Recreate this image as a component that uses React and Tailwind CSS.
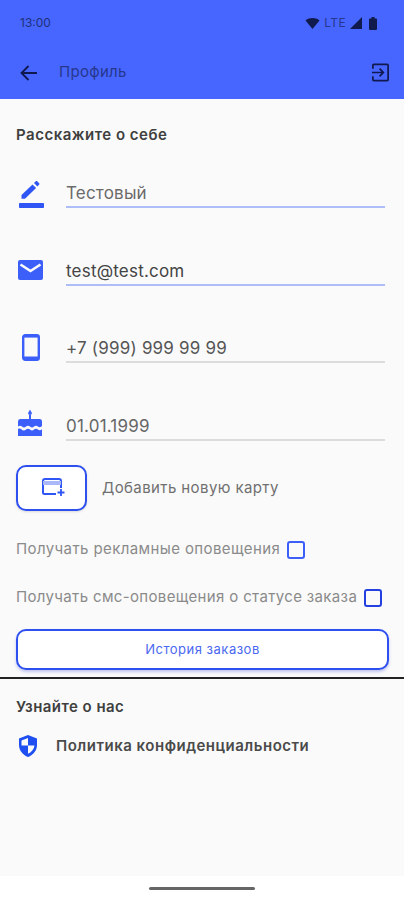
import React from 'react';

function Field({ icon, value, active, textClass, iconClass }) {
  return (
    <div className="flex h-[77.67px] pl-4 pr-[19px]">
      <div className="w-[50px] h-[66px] flex items-center pl-[2px] shrink-0">
        <div className={iconClass}>{icon}</div>
      </div>
      <div className={`flex-1 h-[49px] border-b-2 flex items-end pb-[1px] text-[17px] leading-[24px] tracking-[0.2px] ${active ? 'border-[#aebcf8]' : 'border-[#dcdcdc]'} ${textClass}`}>
        {value}
      </div>
    </div>
  );
}

const PencilIcon = (
  <svg width="26" height="28" viewBox="0 0 26 28" fill="#2f56f5" className="block ml-[1px]">
    <rect x="0" y="23" width="25" height="5" rx="0.800" />
    <path d="M2.500 15 13.500 4.500l3.600 3.600L6 18.800H2.500z" />
    <path d="M15 3l1.800-1.800c.4-.4 1-.4 1.400 0l2 2c.4.4.4 1 0 1.400L18.400 6.400z" />
  </svg>
);

const MailIcon = (
  <svg width="25" height="20" viewBox="0 0 25 20" className="block">
    <rect width="25" height="20" rx="2" fill="#3c5ffa" />
    <path d="M2.500 4.500 12.500 11l10-6.500" fill="none" stroke="#fafafa" strokeWidth="2.600" />
  </svg>
);

const PhoneIcon = (
  <svg width="18" height="27" viewBox="0 0 18 27" className="block ml-1">
    <rect x="1.200" y="1.200" width="15.600" height="24.600" rx="2" fill="none" stroke="#3c5ffa" strokeWidth="2.400" />
    <rect x="1.200" y="22.500" width="15.600" height="3.300" fill="#3c5ffa" />
    <rect x="1.200" y="1.200" width="15.600" height="2.400" fill="#3c5ffa" />
  </svg>
);

const CakeIcon = (
  <svg width="24" height="27" viewBox="0 0 24 27" fill="#3c5ffa" className="block">
    <path d="M12 0.500l1.800 3.200c.5 1.200-.6 2.300-1.800 2.300s-2.300-1.100-1.800-2.300z" />
    <rect x="11" y="6" width="2" height="4" />
    <path d="M2.500 10h19A2.500 2.500 0 0 1 24 12.500V17c-1.500 1.600-3 1.600-4 .6-1.200-1.200-2.800-1.200-4 0-1.200 1.200-2.800 1.200-4 0-1.200-1.200-2.800-1.200-4 0-1.200 1.200-2.800 1.200-4 0-1-1-2.500-1-4-.2v-5A2.500 2.500 0 0 1 2.500 10z" />
    <path d="M0 20c1.400-.6 2.500-.5 3.300.3 1.700 1.600 3.400 1.400 4.700.2 1.200-1.100 2.800-1.100 4 0 1.300 1.200 2.800 1.200 4 0 1.200-1.100 2.800-1.100 4 0 .9.9 2.400 1 4-.2V27H0z" />
  </svg>
);

export default function App() {
  return (
    <div className="w-[404px] h-[900px] flex flex-col bg-[#fafafa] overflow-hidden font-['Inter',sans-serif]">
      <header className="h-[99px] bg-[#4666ff] shrink-0 flex flex-col">
        <div className="h-[46px] flex items-center justify-between pl-5 pr-[27px] text-[12px] text-[#21307a]">
          <span>13:00</span>
          <div className="flex items-center gap-[3px]">
            <svg width="17" height="11" viewBox="0 0 14 11" fill="#101a4d"><path d="M0 2.400C4-.8 10-.8 14 2.400L7 11z" /></svg>
            <span className="text-[12px] tracking-[0.4px] text-[#26378c]">LTE</span>
            <svg width="12" height="12" viewBox="0 0 12 12" fill="#101a4d" className="ml-[1px]"><path d="M12 0v12H0z" /></svg>
            <svg width="8" height="13" viewBox="0 0 8 13" fill="#101a4d" className="ml-[4px]"><path d="M2.500 0h3v1.500H7a1 1 0 0 1 1 1V12a1 1 0 0 1-1 1H1a1 1 0 0 1-1-1V2.500a1 1 0 0 1 1-1h1.500z" /></svg>
          </div>
        </div>
        <div className="flex-1 flex items-center pl-[20px] pr-[14px]">
          <svg width="17" height="16" viewBox="0 0 17 16" fill="none" stroke="#0f1850" strokeWidth="1.800">
            <path d="M17 8H2M8.500 1 1.500 8l7 7" />
          </svg>
          <span className="ml-[22px] text-[15px] tracking-[0.3px] text-[#26378c]">Профиль</span>
          <svg width="19" height="19" viewBox="0 0 20 20" fill="none" stroke="#10194f" strokeWidth="1.800" className="ml-auto">
            <path d="M2 6V2.500a1 1 0 0 1 1-1h14a1 1 0 0 1 1 1v15a1 1 0 0 1-1 1H3a1 1 0 0 1-1-1V14" />
            <path d="M1 10h11.500M9 6l4 4-4 4" />
          </svg>
        </div>
      </header>

      <main className="flex-1 flex flex-col">
        <h2 className="mt-[27px] ml-4 text-[15px] leading-[18px] tracking-[0.5px] font-semibold text-[#3f3f3f]">Расскажите о себе</h2>

        <div className="mt-[15px] flex flex-col">
          <Field icon={PencilIcon} value="Тестовый" active textClass="text-[#6a6a6a]" iconClass="mt-[4px]" />
          <Field icon={MailIcon} value="test@test.com" active textClass="text-[#444444]" />
          <Field icon={PhoneIcon} value="+7 (999) 999 99 99" textClass="text-[#555555]" />
          <Field icon={CakeIcon} value="01.01.1999" textClass="text-[#666666]" iconClass="-mt-[4px]" />
        </div>

        <div className="-mt-[5px] ml-4 flex items-center">
          <button className="w-[71px] h-[46px] rounded-[10px] border-2 border-[#2f50f0] bg-white shadow-sm flex items-center justify-center">
            <svg width="23" height="19" viewBox="0 0 23 19" fill="none" className="ml-[3px]">
              <path d="M1 15V3a2 2 0 0 1 2-2h14a2 2 0 0 1 2 2v7M1 14.500a1.500 1.500 0 0 0 1.500 1.500H14" stroke="#2f56f5" strokeWidth="2" />
              <rect x="1" y="3" width="18" height="4" fill="#aab8fa" />
              <path d="M19 11v7M15.500 14.500h7" stroke="#2f56f5" strokeWidth="1.800" />
            </svg>
          </button>
          <span className="ml-[15px] mt-[2px] text-[15px] tracking-[0.4px] text-[#707070]">Добавить новую карту</span>
        </div>

        <label className="mt-[28px] ml-4 h-[22px] flex items-center text-[15px] tracking-[0.4px] text-[#8a8a8a]">
          Получать рекламные оповещения
          <span className="ml-[7px] w-[18px] h-[18px] rounded-[3px] border-2 border-[#3c5ffa]" />
        </label>
        <label className="mt-[26px] ml-4 h-[22px] flex items-center text-[15px] tracking-[0.35px] text-[#8a8a8a]">
          Получать смс-оповещения о статусе заказа
          <span className="ml-[7px] w-[18px] h-[18px] rounded-[3px] border-2 border-[#2540e0]" />
        </label>

        <button className="mt-[20px] ml-[16px] mr-[15px] h-[41px] pt-[2px] rounded-[10px] border-2 border-[#2f50f0] bg-white shadow-[0_2px_3px_rgba(60,80,220,0.3)] text-[13px] tracking-[0.5px] text-[#4a68f0]">
          История заказов
        </button>

        <div className="mt-[7px] h-[2px] bg-[#222222]" />

        <h2 className="mt-[19px] ml-4 text-[15px] leading-[18px] tracking-[0.45px] font-semibold text-[#3f3f3f]">Узнайте о нас</h2>

        <div className="mt-[19px] ml-[18px] flex items-center">
          <svg width="20" height="22" viewBox="0 0 20 22">
            <path d="M10 0 19 3.500V10c0 5.500-3.800 10-9 12-5.200-2-9-6.500-9-12V3.500z" fill="#1f4ff0" />
            <path d="M10 3 3.500 5.500v5H10zM10 10.500h6.500c-.5 4-3.300 6.800-6.500 8.300z" fill="#fafafa" />
          </svg>
          <span className="ml-[18px] text-[15px] tracking-[0.5px] font-semibold text-[#4a4a4a]">Политика конфиденциальности</span>
        </div>
      </main>

      <div className="h-[24px] bg-white shrink-0 flex items-center justify-center">
        <div className="w-[106px] h-[3px] rounded-full bg-[#666666]" />
      </div>
    </div>
  );
}
